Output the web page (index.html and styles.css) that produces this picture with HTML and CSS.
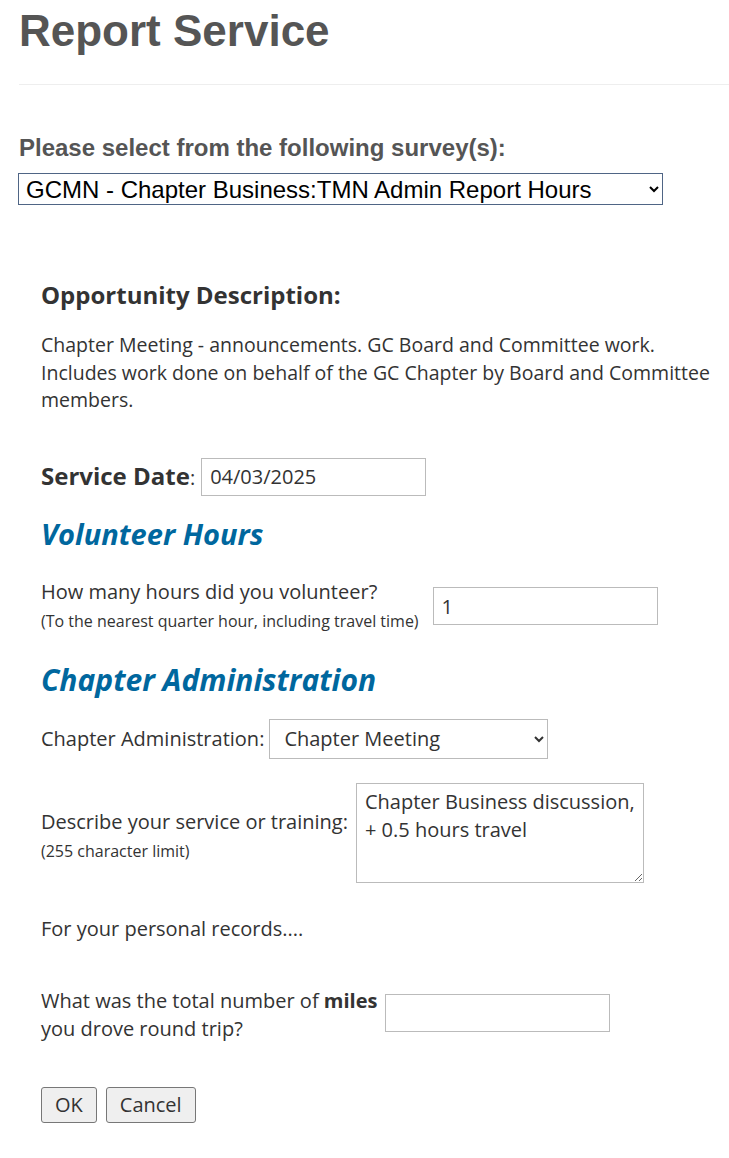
FILE: index.html
```html
<!DOCTYPE html>
<html lang="en">
<head>
    <meta charset="UTF-8">
    <meta name="viewport" content="width=device-width, initial-scale=1.0">
    <title>Report Service</title>
    <link rel="stylesheet" href="styles.css">
</head>
<body>
    <div class="page">
        <h1 class="page-title">Report Service</h1>
        <hr class="divider">

        <div class="survey-pick">
            <label for="survey">Please select from the following survey(s):</label>
            <select id="survey" class="survey-select">
                <option>GCMN - Chapter Business:TMN Admin Report Hours</option>
            </select>
        </div>

        <main class="survey">
            <h3 class="opp-title">Opportunity Description:</h3>
            <p class="opp-desc">Chapter Meeting - announcements. GC Board and Committee work. Includes work done on behalf of the GC Chapter by Board and Committee members.</p>

            <div class="row date-row">
                <label for="svcDate"><b>Service Date</b>:</label>
                <input type="text" id="svcDate" class="field" value="04/03/2025">
            </div>

            <h2 class="section">Volunteer Hours</h2>
            <div class="row hours-row">
                <label for="hours" class="q">How many hours did you volunteer?<br><small>(To the nearest quarter hour, including travel time)</small></label>
                <input type="text" id="hours" class="field" value="1">
            </div>

            <h2 class="section admin-head">Chapter Administration</h2>
            <div class="row admin-row">
                <label for="admin">Chapter Administration:</label>
                <select id="admin" class="field-select">
                    <option>Chapter Meeting</option>
                </select>
            </div>

            <div class="row describe-row">
                <label for="describe" class="q">Describe your service or training:<br><small>(255 character limit)</small></label>
                <textarea id="describe" class="field-area">Chapter Business discussion, + 0.5 hours travel</textarea>
            </div>

            <p class="note">For your personal records....</p>

            <div class="row miles-row">
                <label for="miles" class="q">What was the total number of <b>miles</b><br>you drove round trip?</label>
                <input type="text" id="miles" class="field">
            </div>

            <div class="actions">
                <button type="button">OK</button>
                <button type="button">Cancel</button>
            </div>
        </main>
    </div>
</body>
</html>
```

FILE: styles.css
```css
body { margin: 0; background: #fff; font-family: "Open Sans", sans-serif; color: #333; }
.page { padding: 0 0 30px 19px; }
.page-title { font-family: "Liberation Sans", Arial, sans-serif; font-size: 44px; font-weight: bold; color: #555; margin: 0; padding-top: 6px; line-height: 50px; }
.divider { border: none; border-top: 1px solid #eee; margin: 28px 0 0; }
.survey-pick { margin-top: 49px; }
.survey-pick label { display: block; font-family: "Liberation Sans", Arial, sans-serif; font-size: 24px; line-height: 28px; font-weight: bold; color: #555; margin-bottom: 11px; }
.survey-select { display: block; font-family: "Liberation Sans", Arial, sans-serif; font-size: 24px; color: #000; width: 645px; height: 32px; margin-left: -1px; border: 1px solid #4f6585; border-radius: 0; background: #fff; padding: 0 3px; }

.survey { padding: 74px 0 0 22px; font-size: 20px; line-height: 28px; }
.opp-title { font-size: 24px; line-height: 32px; font-weight: bold; margin: 0; }
.opp-desc { margin: 20px 0 0; font-size: 19.5px; line-height: 27.5px; }

.row { display: flex; align-items: center; gap: 8px; }
.q small { font-size: 16px; }
.date-row { margin-top: 44px; gap: 6px; }
.date-row b { font-size: 24px; }
.hours-row { margin-top: 24px; gap: 14px; }
.admin-row { margin-top: 19px; gap: 5px; }
.describe-row { margin-top: 24px; }
.describe-row .q { padding-top: 7px; }
.miles-row { margin-top: 40px; }
.miles-row .q { padding-top: 4px; }

.field { font-family: "Open Sans", sans-serif; font-size: 20px; color: #333; width: 225px; height: 38px; box-sizing: border-box; border: 1px solid #bbb; padding: 0 8px; }
.field-select { font-family: "Open Sans", sans-serif; font-size: 20px; color: #333; width: 279px; height: 40px; border: 1px solid #bbb; background: #fff; padding: 0 10px; }
.field-area { font-family: "Open Sans", sans-serif; font-size: 20px; color: #333; width: 288px; height: 100px; box-sizing: border-box; border: 1px solid #bbb; padding: 4px 8px 0; line-height: 28px; resize: both; }

.section { font-size: 29px; line-height: 40px; font-style: italic; font-weight: bold; color: #00679e; margin: 18px 0 0; }
.admin-head { font-size: 30px; margin-top: 25px; }
.note { margin: 32px 0 0; }

.actions { display: flex; gap: 9px; margin-top: 44px; }
.actions button { font-family: "Open Sans", sans-serif; font-size: 20px; color: #333; background: #efefef; border: 1px solid #777; border-radius: 3px; height: 36px; padding: 0 13px; }
```
